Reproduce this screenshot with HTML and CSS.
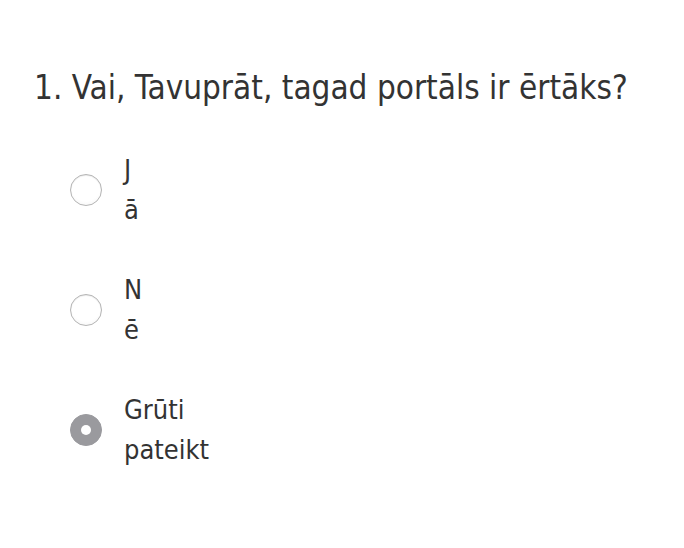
FILE: index.html
```html
<!DOCTYPE html>
<html lang="lv">
<head>
<meta charset="utf-8">
<link rel="stylesheet" href="styles.css">
</head>
<body>
<div class="question">
  <h1 class="title">1. Vai, Tavuprāt, tagad portāls ir ērtāks?</h1>
  <div class="options">
    <label class="option">
      <span class="radio"></span>
      <span class="text"><span class="line">J</span><span class="line">ā</span></span>
    </label>
    <label class="option">
      <span class="radio"></span>
      <span class="text"><span class="line">N</span><span class="line">ē</span></span>
    </label>
    <label class="option">
      <span class="radio checked"></span>
      <span class="text"><span class="line">Grūti</span><span class="line">pateikt</span></span>
    </label>
  </div>
</div>
</body>
</html>
```
FILE: styles.css
```css
html, body {
  margin: 0;
  padding: 0;
  background: #ffffff;
}
body {
  font-family: "DejaVu Sans Condensed", "DejaVu Sans", sans-serif;
  color: #333333;
  width: 684px;
  height: 548px;
  overflow: hidden;
}
.question {
  padding: 68px 0 0 34px;
}
.title {
  margin: 0;
  font-size: 33px;
  font-weight: normal;
  line-height: 40px;
  letter-spacing: 0;
}
.options {
  display: flex;
  flex-direction: column;
  gap: 40px;
  margin-top: 42px;
  padding-left: 36px;
}
.option {
  display: flex;
  align-items: center;
  gap: 22px;
}
.radio {
  width: 30px;
  height: 30px;
  border: 1px solid #b4b4b4;
  border-radius: 50%;
  background: radial-gradient(circle at 50% 40%, #ffffff 60%, #f0f0f0 100%);
  box-shadow: inset 0 1px 1px rgba(0,0,0,0.08);
  flex: none;
  position: relative;
}
.radio.checked {
  border-color: #9a9a9e;
  background: #9a9a9e;
  box-shadow: none;
}
.radio.checked::after {
  content: "";
  position: absolute;
  left: 50%;
  top: 50%;
  width: 10px;
  height: 10px;
  margin: -5px 0 0 -5px;
  border-radius: 50%;
  background: #ffffff;
}
.text {
  display: flex;
  flex-direction: column;
  font-size: 27px;
  line-height: 40px;
}
.line {
  display: block;
}
```
